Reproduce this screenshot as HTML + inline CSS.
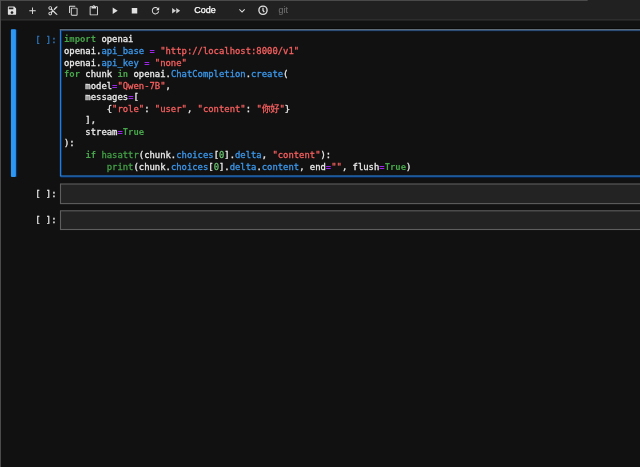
<!DOCTYPE html>
<html lang="en">
<head>
<meta charset="utf-8">
<title>Notebook</title>
<style>
html,body{margin:0;padding:0;background:#111111;}
body{width:640px;height:467px;overflow:hidden;background:#111111;position:relative;
  font-family:"DejaVu Sans Mono","Liberation Mono","Noto Sans CJK SC",monospace;}
#shapes{position:absolute;left:0;top:0;width:640px;height:467px;}
#text{position:absolute;left:0;top:0;width:640px;height:467px;filter:blur(0.3px);}
.tbtext{position:absolute;font-family:"Liberation Sans",sans-serif;color:#fff;font-size:9px;line-height:11px;top:5px;-webkit-text-stroke:0.25px #fff;}
.prompt{position:absolute;left:17px;width:39.5px;text-align:right;font-size:8.9px;line-height:11.55px;color:#e6e6e6;white-space:pre;-webkit-text-stroke:0.3px;}
pre{margin:0;position:absolute;left:64px;top:34.4px;font-family:inherit;font-size:8.9px;line-height:11.56px;color:#ececec;white-space:pre;-webkit-text-stroke:0.3px;}
.k{color:#47a64b;font-weight:bold;-webkit-text-stroke:0;}
.b{color:#43a047;}
.n{color:#66bb6a;}
.s{color:#f75f5f;}
.p{color:#3b98ec;}
.o{color:#9c25ea;font-weight:bold;-webkit-text-stroke:0;}
</style>
</head>
<body>
<svg id="shapes" viewBox="0 0 640 467">
<!-- toolbar -->
<rect x="0" y="0" width="640" height="19.2" fill="#212121"/>
<rect x="0" y="18.900" width="640" height="1.700" fill="#2d2d2d"/>
<rect x="0" y="0" width="587.600" height="0.9" fill="#505050"/>
<rect x="0" y="0" width="0.950" height="467" fill="#505050"/>
<g fill="#e0e0e0">
<g transform="translate(6.500,5.250) scale(0.45833)"><path d="M17 3H5c-1.110 0-2 .9-2 2v14c0 1.100.89 2 2 2h14c1.100 0 2-.9 2-2V7l-4-4zm-5 16c-1.660 0-3-1.340-3-3s1.340-3 3-3 3 1.340 3 3-1.340 3-3 3zm3-10H5V5h10v4z"/></g>
<g transform="translate(27,5.250) scale(0.45833)"><path d="M19 13h-6v6h-2v-6H5v-2h6V5h2v6h6v2z"/></g>
<g transform="translate(47.500,5.250) scale(0.45833)"><path d="M9.640 7.640c.23-.5.36-1.050.36-1.640 0-2.210-1.790-4-4-4S2 3.790 2 6s1.790 4 4 4c.59 0 1.140-.13 1.640-.36L10 12l-2.360 2.360C7.140 14.130 6.590 14 6 14c-2.210 0-4 1.790-4 4s1.790 4 4 4 4-1.790 4-4c0-.59-.13-1.140-.36-1.640L12 14l7 7h3v-1L9.640 7.640zM6 8c-1.100 0-2-.89-2-2s.9-2 2-2 2 .89 2 2-.9 2-2 2zm0 12c-1.100 0-2-.89-2-2s.9-2 2-2 2 .89 2 2-.9 2-2 2zm6-7.500c-.28 0-.5-.22-.5-.5s.22-.5.5-.5.5.22.5.5-.22.5-.5.500zM19 3l-6 6 2 2 7-7V3z"/></g>
<g transform="translate(68,5.250) scale(0.61111)"><path d="M11.900,1H3.200C2.400,1,1.700,1.700,1.700,2.500v10.200h1.500V2.500h8.700V1z M14.100,3.900h-8c-0.800,0-1.500,0.700-1.500,1.500v10.200c0,0.800,0.700,1.500,1.500,1.500h8 c0.800,0,1.500-0.700,1.500-1.500V5.400C15.500,4.600,14.900,3.900,14.100,3.900z M14.100,15.500h-8V5.400h8V15.500z"/></g>
<g transform="translate(88.300,5.250) scale(0.45833)"><path d="M19 2h-4.180C14.400.84 13.300 0 12 0c-1.300 0-2.400.84-2.820 2H5c-1.100 0-2 .9-2 2v16c0 1.100.9 2 2 2h14c1.100 0 2-.9 2-2V4c0-1.100-.9-2-2-2zm-7 0c.55 0 1 .45 1 1s-.45 1-1 1-1-.45-1-1 .45-1 1-1zm7 18H5V4h2v3h10V4h2v16z"/></g>
<g transform="translate(109,5.250) scale(0.45833)"><path d="M8 5v14l11-7z"/></g>
<g transform="translate(129,5.250) scale(0.45833)"><path d="M6 6h12v12H6z"/></g>
<g transform="translate(150,5.250) scale(0.61111)"><path d="M9 13.500c-2.490 0-4.500-2.010-4.500-4.500S6.510 4.500 9 4.500c1.240 0 2.360.52 3.170 1.330L10 8h5V3l-1.760 1.760C12.150 3.680 10.660 3 9 3 5.690 3 3.010 5.690 3.010 9S5.690 15 9 15c2.970 0 5.430-2.160 5.900-5h-1.520c-.46 2-2.240 3.500-4.380 3.500z"/></g>
<g transform="translate(170.300,5.250) scale(0.45833)" fill="#d0d0d0"><path d="M4 18l8.500-6L4 6v12zm9-12v12l8.500-6L13 6z"/></g>
<g transform="translate(236.500,5.300) scale(0.61111)"><path d="M5.200,5.900L9,9.700l3.800-3.800l1.200,1.200l-4.900,5l-4.900-5L5.200,5.900z"/></g>
</g>
<!-- clock -->
<g fill="none" stroke="#e0e0e0">
<circle cx="263" cy="10.250" r="4.100" stroke-width="1.350"/>
<path d="M263 7.800V10.500L264.300 12" stroke-width="1.250"/>
</g>
<!-- collapser -->
<rect x="11.300" y="29.600" width="5.900" height="147.500" rx="1" fill="#0a2c5e"/>
<rect x="10.900" y="29.300" width="5" height="147.600" rx="0.800" fill="#2c97f4"/>
<!-- active cell -->
<rect x="60.400" y="29.600" width="590" height="146.400" fill="#111111"/>
<rect x="61.300" y="30.500" width="590" height="146.400" fill="none" stroke="#08306a" stroke-width="1.400"/>
<rect x="60.400" y="29.600" width="590" height="146.400" fill="none" stroke="#2a86e0" stroke-width="1.050"/>
<rect x="59.800" y="28.200" width="590" height="0.900" fill="#090909"/>
<rect x="59.800" y="29" width="590" height="1.400" fill="#5f6a77"/>
<!-- cells -->
<rect x="60.500" y="184" width="590" height="19.600" fill="#232323" stroke="#5e5e5e" stroke-width="1.100"/>
<rect x="60.500" y="210.800" width="590" height="18.700" fill="#232323" stroke="#5e5e5e" stroke-width="1.100"/>
</svg>
<div id="text">
<div class="tbtext" style="left:194.200px">Code</div>
<div class="tbtext" style="left:278.500px;color:#6c6c6c;-webkit-text-stroke:0.15px #6c6c6c">git</div>
<div class="prompt" style="top:34.900px;color:#2a70b4;-webkit-text-stroke:0.4px #2a70b4">[ ]:</div>
<pre><span class="k">import</span> openai
openai.<span class="p">api_base</span> <span class="o">=</span> <span class="s">"http://localhost:8000/v1"</span>
openai.<span class="p">api_key</span> <span class="o">=</span> <span class="s">"none"</span>
<span class="k">for</span> chunk <span class="k">in</span> openai.<span class="p">ChatCompletion</span>.<span class="p">create</span>(
    model<span class="o">=</span><span class="s">"Qwen-7B"</span>,
    messages<span class="o">=</span>[
        {<span class="s">"role"</span>: <span class="s">"user"</span>, <span class="s">"content"</span>: <span class="s">"你好"</span>}
    ],
    stream<span class="o">=</span><span class="k">True</span>
):
    <span class="k">if</span> <span class="b">hasattr</span>(chunk.<span class="p">choices</span>[<span class="n">0</span>].<span class="p">delta</span>, <span class="s">"content"</span>):
        <span class="b">print</span>(chunk.<span class="p">choices</span>[<span class="n">0</span>].<span class="p">delta</span>.<span class="p">content</span>, end<span class="o">=</span><span class="s">""</span>, flush<span class="o">=</span><span class="k">True</span>)</pre>
<div class="prompt" style="top:188.500px">[ ]:</div>
<div class="prompt" style="top:215.100px">[ ]:</div>
</div>
</body>
</html>
